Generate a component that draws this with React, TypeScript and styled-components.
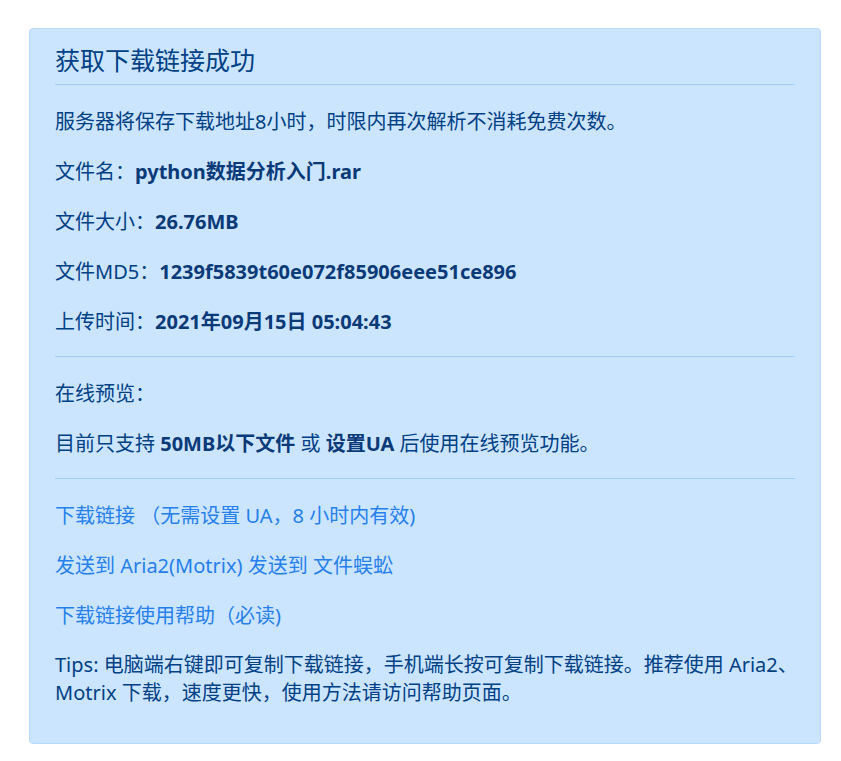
import React from 'react'
import styled, { createGlobalStyle } from 'styled-components'

const GlobalStyle = createGlobalStyle`
    body {
        margin: 0;
        background: #ffffff;
        font-family: "Noto Sans", "Noto Sans CJK SC", sans-serif;
    }
`

const Page = styled.div`
    padding: 28px 20px 18px 29px;
`

const Alert = styled.div`
    width: 792px;
    box-sizing: border-box;
    background: #cce5ff;
    border: 1px solid #b8daff;
    border-radius: 4px;
    color: #004085;
    padding: 16px 25px 15px;
`

const Title = styled.h4`
    margin: 0;
    font-size: 25px;
    line-height: 30px;
    font-weight: 400;
`

const Rule = styled.hr<{ $top?: number; $bottom?: number }>`
    border: 0;
    border-top: 1px solid #9fcdff;
    margin: ${p => p.$top ?? 0}px 0 ${p => p.$bottom ?? 22}px;
`

const Line = styled.p<{ $top?: number; $nowrap?: boolean }>`
    margin: ${p => p.$top ?? 0}px 0 21px;
    font-size: 20px;
    line-height: 29px;
    white-space: ${p => (p.$nowrap ? 'nowrap' : 'normal')};
`

const TipsLine = styled(Line)`
    line-height: 28px;
`

const Strong = styled.b`
    font-weight: 700;
    color: #0a3a78;
`

const Link = styled.a`
    color: #2580ec;
    text-decoration: none;
    &:hover {
        text-decoration: underline;
    }
`

const infos = [
    { label: '文件名：', value: 'python数据分析入门.rar' },
    { label: '文件大小：', value: '26.76MB' },
    { label: '文件MD5：', value: '1239f5839t60e072f85906eee51ce896' },
    { label: '上传时间：', value: '2021年09月15日 05:04:43' },
]

const App = () => {
    return (
        <Page>
            <GlobalStyle />
            <Alert>
                <Title>获取下载链接成功</Title>
                <Rule $top={9} $bottom={22} />
                <Line>服务器将保存下载地址8小时，时限内再次解析不消耗免费次数。</Line>
                {infos.map(i => (
                    <Line key={i.label}>
                        {i.label}<Strong>{i.value}</Strong>
                    </Line>
                ))}
                <Rule $top={-1} />
                <Line>在线预览：</Line>
                <Line>
                    目前只支持 <Strong>50MB以下文件</Strong> 或 <Strong>设置UA</Strong> 后使用在线预览功能。
                </Line>
                <Rule $top={-1} />
                <Line>
                    <Link href="#">下载链接 （无需设置 UA，8 小时内有效)</Link>
                </Line>
                <Line>
                    <Link href="#">发送到 Aria2(Motrix)</Link> <Link href="#">发送到 文件蜈蚣</Link>
                </Line>
                <Line>
                    <Link href="#">下载链接使用帮助（必读)</Link>
                </Line>
                <TipsLine $top={2} $nowrap>
                    Tips: 电脑端右键即可复制下载链接，手机端长按可复制下载链接。推荐使用 Aria2、<br />
                    Motrix 下载，速度更快，使用方法请访问帮助页面。
                </TipsLine>
            </Alert>
        </Page>
    )
}

export default App
